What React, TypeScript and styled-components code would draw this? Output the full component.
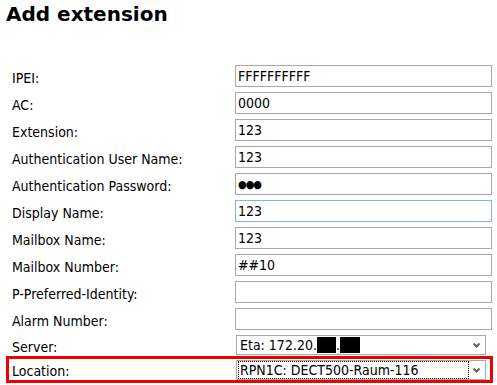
import React from "react";
import styled, { createGlobalStyle } from "styled-components";

const GlobalStyle = createGlobalStyle`
  html, body {
    margin: 0;
    padding: 0;
    background: #ffffff;
  }
  body {
    font-family: "DejaVu Sans Condensed", "DejaVu Sans", Verdana, sans-serif;
    color: #000000;
  }
`;

const Page = styled.div`
  width: 497px;
  height: 385px;
  overflow: hidden;
  padding: 0 4px 0 6px;
  box-sizing: border-box;
`;

const Title = styled.h2`
  margin: 0;
  padding-top: 2px;
  height: 63px;
  font-family: "DejaVu Sans", Verdana, sans-serif;
  font-size: 20px;
  font-weight: bold;
  line-height: 24px;
`;

const Form = styled.div`
  display: flex;
  flex-direction: column;
`;

const Row = styled.div<{ $highlight?: boolean; $tall?: number }>`
  display: grid;
  grid-template-columns: 224px 1fr;
  align-items: center;
  height: ${(p) => p.$tall ?? 22}px;
  margin-bottom: 5px;
  padding-left: 3px;
  border: 3px solid ${(p) => (p.$highlight ? "#ee0000" : "transparent")};
  border-top: none;
  border-bottom: none;
  ${(p) =>
    p.$highlight &&
    `
    border-top: 3px solid #ee0000;
    border-bottom: 3px solid #ee0000;
    margin-top: -4px;
    height: 21px;
  `}
`;

const Label = styled.span`
  font-size: 14px;
  padding-top: 3px;
  white-space: nowrap;
`;

const TextBox = styled.div<{ $focused?: boolean }>`
  box-sizing: border-box;
  width: 257px;
  height: 22px;
  margin-left: -1px;
  border: 1px solid ${(p) => (p.$focused ? "#7eb4ea" : "#a9a9a9")};
  padding: 0 2px;
  font-size: 14px;
  line-height: 20px;
  white-space: nowrap;
  overflow: hidden;
`;

const Dots = styled.span`
  font-size: 11px;
  letter-spacing: -1px;
  position: relative;
  top: -1px;
`;

const SelectBox = styled.div<{ $active?: boolean }>`
  box-sizing: border-box;
  width: 250px;
  height: 20px;
  border: 1px solid #a9a9a9;
  border-right-color: ${(p) => (p.$active ? "#7eb4ea" : "#a9a9a9")};
  display: flex;
  align-items: center;
  font-size: 14px;
  padding-left: 2px;
`;

const SelectText = styled.div<{ $active?: boolean }>`
  flex: 1;
  height: 16px;
  line-height: 16px;
  padding-left: 1px;
  white-space: nowrap;
  overflow: hidden;
  outline: ${(p) => (p.$active ? "1px dotted #000" : "none")};
`;

const Redact = styled.span<{ $w: number }>`
  display: inline-block;
  width: ${(p) => p.$w}px;
  height: 16px;
  background: #000;
  vertical-align: -3px;
`;

const Chevron = styled.svg`
  width: 17px;
  height: 18px;
  flex-shrink: 0;
`;

const Arrow = () => (
  <Chevron viewBox="0 0 17 18">
    <path d="M5.5 7.5 L8.5 10.5 L11.5 7.5" fill="none" stroke="#606060" strokeWidth="2" />
  </Chevron>
);

const fields: { label: string; value: string; focused?: boolean; password?: boolean }[] = [
  { label: "IPEI:", value: "FFFFFFFFFF" },
  { label: "AC:", value: "0000" },
  { label: "Extension:", value: "123" },
  { label: "Authentication User Name:", value: "123" },
  { label: "Authentication Password:", value: "●●●", password: true },
  { label: "Display Name:", value: "123", focused: true },
  { label: "Mailbox Name:", value: "123" },
  { label: "Mailbox Number:", value: "##10" },
  { label: "P-Preferred-Identity:", value: "" },
  { label: "Alarm Number:", value: "" },
];

export default function App() {
  return (
    <>
      <GlobalStyle />
      <Page>
        <Title>Add extension</Title>
        <Form>
          {fields.map((f) => (
            <Row key={f.label}>
              <Label>{f.label}</Label>
              <TextBox $focused={f.focused}>
                {f.password ? <Dots>{f.value}</Dots> : f.value}
              </TextBox>
            </Row>
          ))}
          <Row $tall={20}>
            <Label>Server:</Label>
            <SelectBox>
              <SelectText>
                Eta: 172.20.<Redact $w={19} />.<Redact $w={20} />
              </SelectText>
              <Arrow />
            </SelectBox>
          </Row>
          <Row $highlight>
            <Label>Location:</Label>
            <SelectBox $active>
              <SelectText $active>RPN1C: DECT500-Raum-116</SelectText>
              <Arrow />
            </SelectBox>
          </Row>
        </Form>
      </Page>
    </>
  );
}
